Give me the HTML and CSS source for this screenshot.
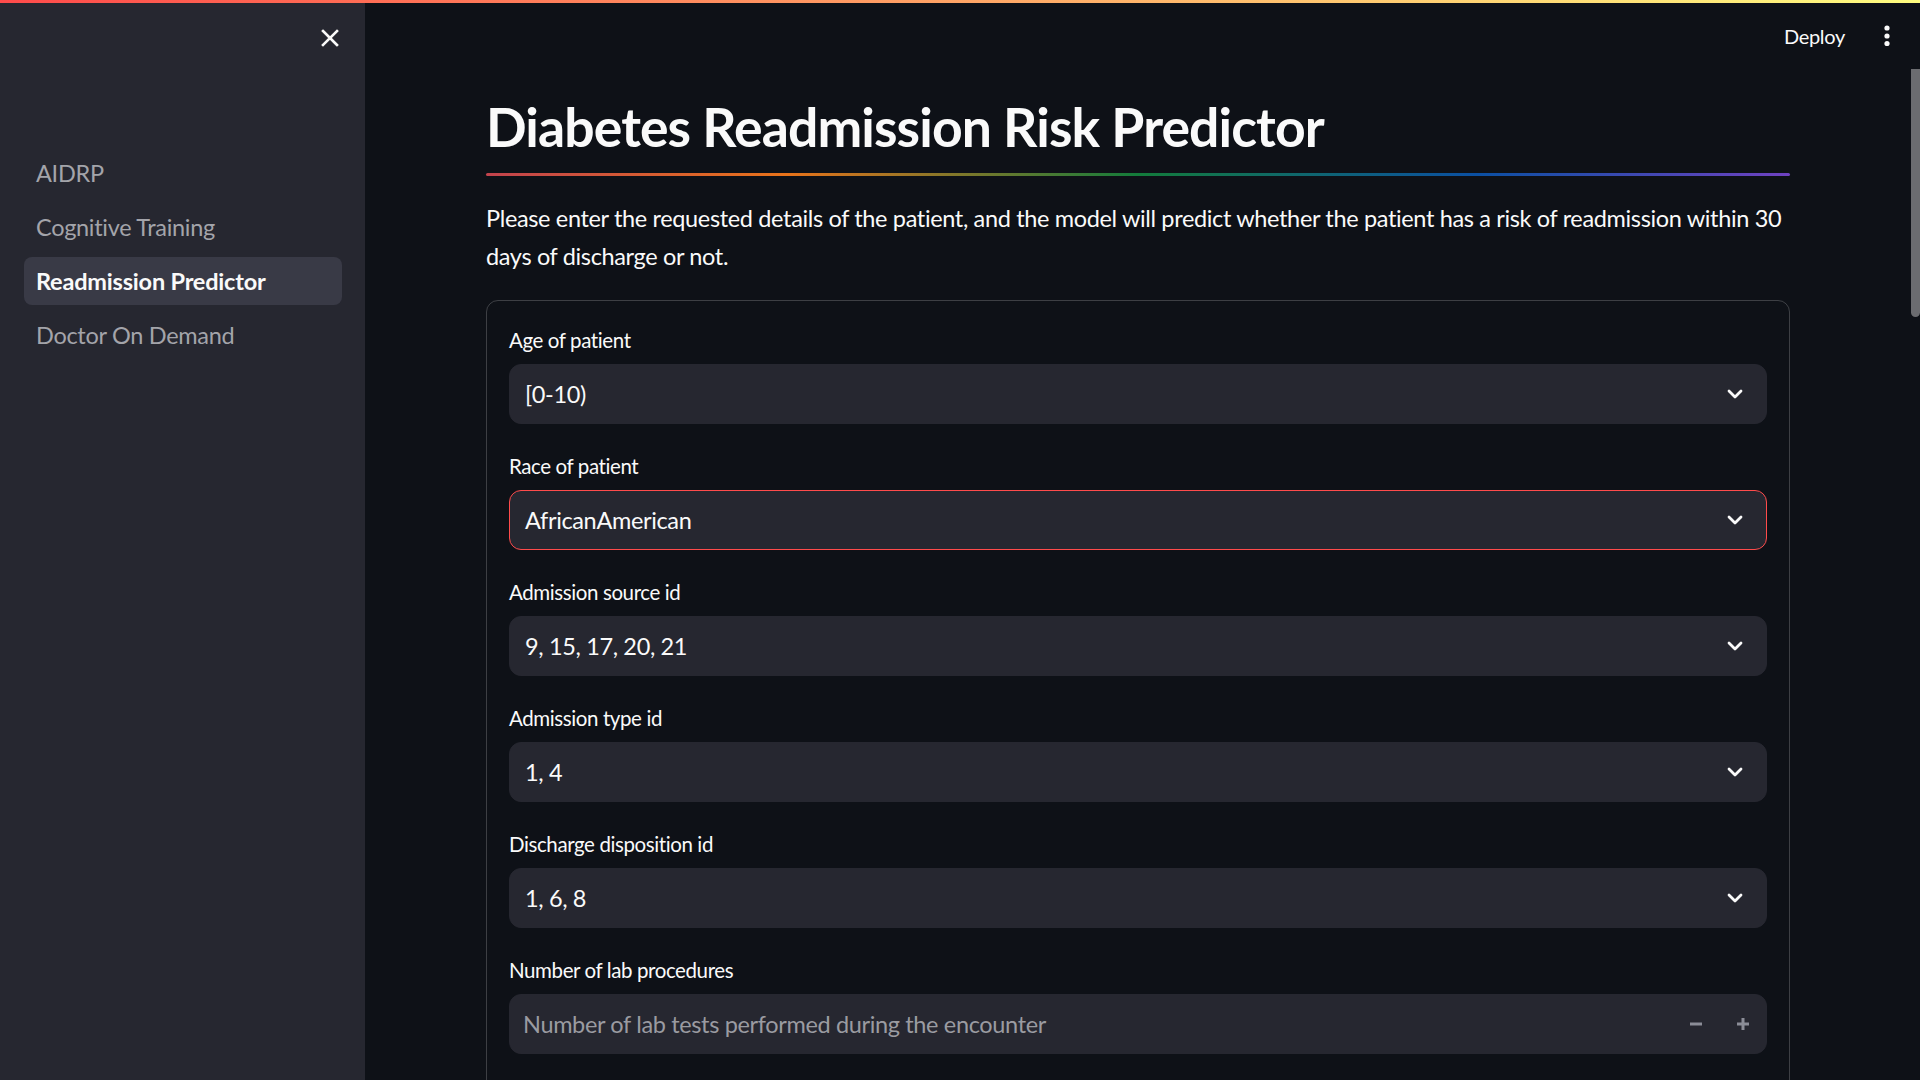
FILE: index.html
```html
<!DOCTYPE html>
<html lang="en">
<head>
<meta charset="utf-8">
<title>Diabetes Readmission Risk Predictor</title>
<link rel="stylesheet" href="styles.css">
</head>
<body>
<div class="decoration"></div>
<div class="app">
  <aside class="sidebar">
    <div class="sidebar-header">
      <button class="close-btn" aria-label="Close sidebar">
        <svg width="20" height="20" viewBox="0 0 20 20"><path d="M3 3 L17 17 M17 3 L3 17" stroke="#fafafa" stroke-width="2.6" stroke-linecap="square"/></svg>
      </button>
    </div>
    <nav class="nav">
      <a class="nav-item">AIDRP</a>
      <a class="nav-item">Cognitive Training</a>
      <a class="nav-item active">Readmission Predictor</a>
      <a class="nav-item">Doctor On Demand</a>
    </nav>
  </aside>
  <main class="main">
    <header class="topbar">
      <span class="deploy">Deploy</span>
      <span class="menu-dots">
        <svg width="8" height="24" viewBox="0 0 8 24"><circle cx="4" cy="4" r="2.6" fill="#fafafa"/><circle cx="4" cy="12" r="2.6" fill="#fafafa"/><circle cx="4" cy="19.5" r="2.6" fill="#fafafa"/></svg>
      </span>
    </header>
    <section class="content">
      <h1 class="title">Diabetes Readmission Risk Predictor</h1>
      <div class="rainbow"></div>
      <p class="intro">Please enter the requested details of the patient, and the model will predict whether the patient has a risk of readmission within 30 days of discharge or not.</p>
      <form class="card">
        <div class="field">
          <label class="label">Age of patient</label>
          <div class="select"><span>[0-10)</span><svg class="chev" width="16" height="10" viewBox="0 0 16 10"><path d="M2 2 L8 8 L14 2" fill="none" stroke="#fafafa" stroke-width="2.8" stroke-linecap="round" stroke-linejoin="round"/></svg></div>
        </div>
        <div class="field">
          <label class="label">Race of patient</label>
          <div class="select focused"><span>AfricanAmerican</span><svg class="chev" width="16" height="10" viewBox="0 0 16 10"><path d="M2 2 L8 8 L14 2" fill="none" stroke="#fafafa" stroke-width="2.8" stroke-linecap="round" stroke-linejoin="round"/></svg></div>
        </div>
        <div class="field">
          <label class="label">Admission source id</label>
          <div class="select"><span>9, 15, 17, 20, 21</span><svg class="chev" width="16" height="10" viewBox="0 0 16 10"><path d="M2 2 L8 8 L14 2" fill="none" stroke="#fafafa" stroke-width="2.8" stroke-linecap="round" stroke-linejoin="round"/></svg></div>
        </div>
        <div class="field">
          <label class="label">Admission type id</label>
          <div class="select"><span>1, 4</span><svg class="chev" width="16" height="10" viewBox="0 0 16 10"><path d="M2 2 L8 8 L14 2" fill="none" stroke="#fafafa" stroke-width="2.8" stroke-linecap="round" stroke-linejoin="round"/></svg></div>
        </div>
        <div class="field">
          <label class="label">Discharge disposition id</label>
          <div class="select"><span>1, 6, 8</span><svg class="chev" width="16" height="10" viewBox="0 0 16 10"><path d="M2 2 L8 8 L14 2" fill="none" stroke="#fafafa" stroke-width="2.8" stroke-linecap="round" stroke-linejoin="round"/></svg></div>
        </div>
        <div class="field">
          <label class="label">Number of lab procedures</label>
          <div class="number">
            <span class="placeholder">Number of lab tests performed during the encounter</span>
            <span class="step"><svg width="14" height="14" viewBox="0 0 14 14"><path d="M1 7 H13" stroke="#8b8d97" stroke-width="3"/></svg></span>
            <span class="step"><svg width="14" height="14" viewBox="0 0 14 14"><path d="M1 7 H13 M7 1 V13" stroke="#8b8d97" stroke-width="3"/></svg></span>
          </div>
        </div>
      </form>
    </section>
    <div class="scroll-thumb"></div>
  </main>
</div>
</body>
</html>
```

FILE: styles.css
```css
* { box-sizing: border-box; }
html, body {
  margin: 0;
  padding: 0;
  height: 1080px;
  overflow: hidden;
  background: #0e1117;
  color: #fafafa;
  font-family: "Source Sans Pro", Lato, "Liberation Sans", sans-serif;
}
.decoration {
  height: 3px;
  background: linear-gradient(90deg, #ff4b4b, #fffd80);
}
.app {
  display: flex;
  height: 1077px;
}
.sidebar {
  width: 365px;
  flex: none;
  background: #262730;
  display: flex;
  flex-direction: column;
}
.sidebar-header {
  display: flex;
  justify-content: flex-end;
  padding: 25px 25px 0 0;
  height: 146px;
  flex: none;
}
.close-btn {
  background: none;
  border: none;
  padding: 0;
  width: 20px;
  height: 20px;
  display: flex;
}
.nav {
  display: flex;
  flex-direction: column;
  gap: 6px;
  padding: 0 23px 0 24px;
}
.nav-item {
  height: 48px;
  display: flex;
  align-items: center;
  padding-left: 12px;
  border-radius: 8px;
  font-size: 23.5px;
  letter-spacing: -0.3px;
  color: #a3a4aa;
}
.nav-item.active {
  background: #393a46;
  color: #fafafa;
  font-weight: 700;
  letter-spacing: -0.2px;
}
.main {
  flex: 1;
  position: relative;
  display: flex;
  flex-direction: column;
  overflow: hidden;
}
.topbar {
  flex: none;
  height: 66px;
  display: flex;
  justify-content: flex-end;
  align-items: center;
  padding-right: 29px;
  gap: 38px;
}
.deploy {
  font-size: 20px;
  letter-spacing: -0.3px;
  color: #fafafa;
}
.menu-dots { display: flex; }
.content {
  flex: none;
  padding-left: 121px;
  width: 1425px;
}
.title {
  margin: 24px 0 0 0;
  font-size: 53.5px;
  line-height: 66px;
  font-weight: 700;
  letter-spacing: -0.9px;
}
.rainbow {
  margin-top: 14px;
  height: 3px;
  border-radius: 3px;
  background: linear-gradient(90deg, #c2434d 0%, #e8731a 23%, #137c3b 50%, #0b50a3 76%, #6f42c1 100%);
}
.intro {
  margin: 23px -12px 0 0;
  font-size: 23.5px;
  letter-spacing: -0.35px;
  line-height: 38.4px;
}
.card {
  margin-top: 24px;
  border: 1px solid rgba(250, 250, 250, 0.2);
  border-radius: 12px;
  padding: 21px 22px 60px;
  display: flex;
  flex-direction: column;
  gap: 24px;
}
.label {
  display: flex;
  align-items: center;
  height: 36px;
  margin-bottom: 6px;
  font-size: 20.5px;
  letter-spacing: -0.4px;
  color: #fafafa;
}
.select, .number {
  height: 60px;
  border-radius: 12px;
  background: #262730;
  border: 1px solid #262730;
  display: flex;
  align-items: center;
  font-size: 23.5px;
  letter-spacing: -0.35px;
}
.select {
  justify-content: space-between;
  padding: 0 23px 0 15px;
}
.select.focused { border-color: #ff4b4b; }
.number {
  padding-left: 13px;
}
.placeholder {
  flex: 1;
  color: #9a9ba1;
}
.step {
  width: 47px;
  height: 100%;
  display: flex;
  align-items: center;
  justify-content: center;
}
.scroll-thumb {
  position: absolute;
  right: 0;
  top: 66px;
  width: 9px;
  height: 248px;
  background: #6b6c70;
  border-radius: 0 0 5px 5px;
}
```
